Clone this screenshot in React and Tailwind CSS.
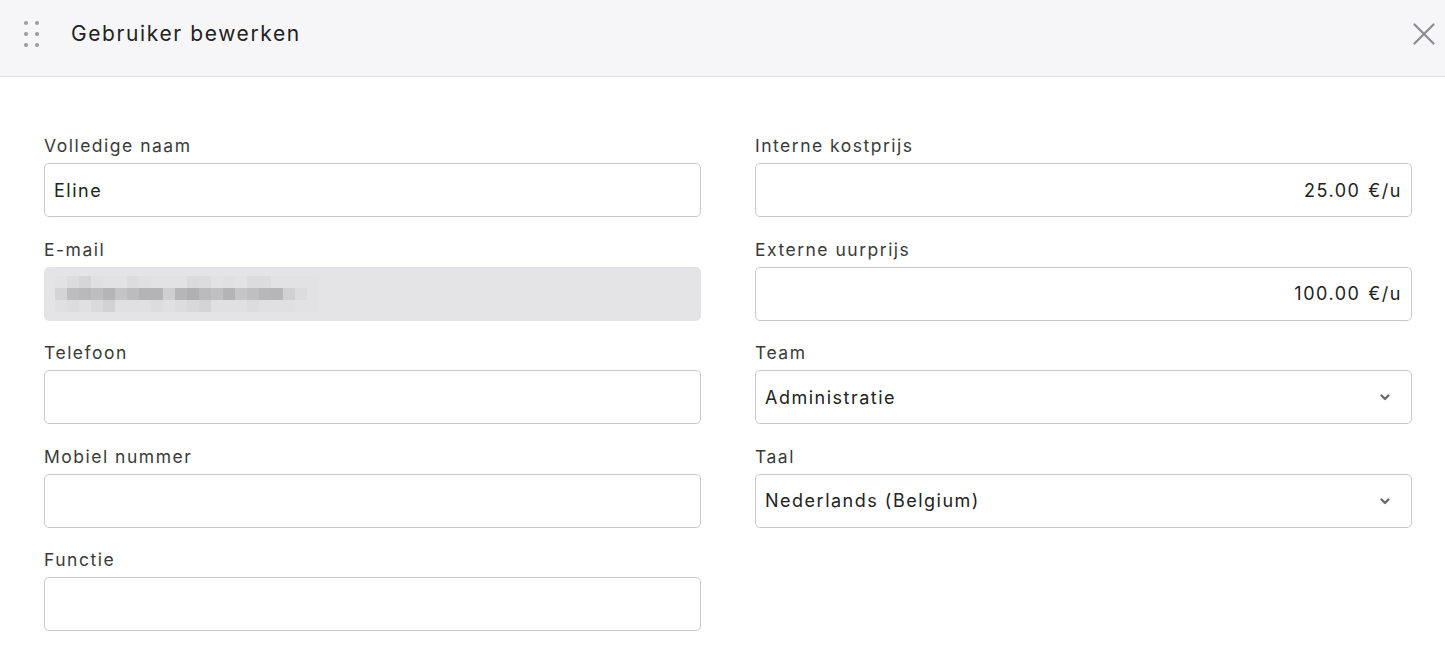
const shadesTop = ['#e2e2e4','#dcdcde','#d6d6d8','#e0e0e2','#e2e2e4','#e2e2e4','#dcdcde','#e0e0e2','#e2e2e4','#e2e2e4','#e2e2e4','#dadadc','#dcdcde','#e2e2e4','#e0e0e2','#e2e2e4','#dcdcde','#dcdcde','#e2e2e4','#e2e2e4','#e2e2e4','#e2e2e4']
const shadesMid = ['#d4d4d6','#bdbdbf','#b9b9bb','#bebebf','#b5b5b7','#c4c4c6','#bcbcbe','#b4b4b6','#b4b4b6','#cfcfd1','#b6b6b8','#b0b0b2','#bbbbbd','#c0c0c2','#b4b4b6','#c6c6c8','#bfbfc1','#b8b8ba','#b6b6b8','#d0d0d2','#dcdcde','#e2e2e4']
const shadesBot = ['#e0e0e2','#dcdcde','#e0e0e2','#dadadc','#d2d2d4','#e0e0e2','#e0e0e2','#e0e0e2','#dcdcde','#e0e0e2','#dcdcde','#d8d8da','#d4d4d6','#e0e0e2','#e0e0e2','#e0e0e2','#dcdcde','#e0e0e2','#e0e0e2','#e0e0e2','#e2e2e4','#e2e2e4']

function Label({ children }) {
  return <div className="h-6 mb-[5px] text-[17.5px] leading-6 tracking-[1.5px] text-[#3a3a3a]">{children}</div>
}

function Field({ label, children }) {
  return (
    <div className="mb-[20.5px]">
      <Label>{label}</Label>
      {children}
    </div>
  )
}

function TextInput({ value = '' }) {
  return (
    <div className="h-[54px] border border-[#c9c9cc] rounded-[5px] bg-white flex items-center px-[9px] text-[18px] tracking-[1.5px] text-[#222]">
      {value}
    </div>
  )
}

function PriceInput({ value }) {
  return (
    <div className="h-[54px] border border-[#c9c9cc] rounded-[5px] bg-white flex items-center justify-end gap-[8px] px-[9px] text-[18px] tracking-[1.5px] text-[#222]">
      <span>{value}</span>
      <span>€/u</span>
    </div>
  )
}

function SelectInput({ value }) {
  return (
    <div className="h-[54px] border border-[#c9c9cc] rounded-[5px] bg-white flex items-center justify-between pl-[9px] pr-[20px] text-[18px] tracking-[1.5px] text-[#222]">
      <span>{value}</span>
      <svg width="12" height="8" viewBox="0 0 12 8" fill="none">
        <path d="M2.5 2.5l3.5 3.5 3.5-3.5" stroke="#6b6b72" strokeWidth="2.4" strokeLinecap="round" strokeLinejoin="round" />
      </svg>
    </div>
  )
}

function BlurredEmail() {
  return (
    <div className="h-[54px] rounded-[5px] bg-[#e4e4e6] flex items-center pl-[11px]">
      <div className="flex flex-col">
        {[shadesTop, shadesMid, shadesBot].map((row, i) => (
          <div key={i} className="flex">
            {row.map((c, j) => (
              <div key={j} className="w-3 h-3" style={{ backgroundColor: c }} />
            ))}
          </div>
        ))}
      </div>
    </div>
  )
}

export default function App() {
  return (
    <div className="w-[1445px] h-[648px] bg-white overflow-hidden" style={{ fontFamily: 'Inter, "Liberation Sans", sans-serif' }}>
      <div className="h-[77px] bg-[#f6f6f8] border-b border-[#dfdfe2] flex items-center pb-[9px] pl-[24px] pr-[10px]">
        <div className="grid grid-cols-2 gap-x-[7px] gap-y-[7px]">
          {[0, 1, 2, 3, 4, 5].map(i => (
            <div key={i} className="w-[4px] h-[4px] rounded-full bg-[#9a9aa0]" />
          ))}
        </div>
        <div className="ml-[32px] text-[21px] tracking-[1.6px] text-[#222]">Gebruiker bewerken</div>
        <button className="ml-auto">
          <svg width="22" height="22" viewBox="0 0 22 22" fill="none">
            <path d="M1.5 1.5l19 19M20.5 1.5l-19 19" stroke="#8b8b90" strokeWidth="2.2" strokeLinecap="round" />
          </svg>
        </button>
      </div>

      <div className="grid grid-cols-2 gap-x-[54px] pl-[44px] pr-[33px] pt-[57px]">
        <div>
          <Field label="Volledige naam"><TextInput value="Eline" /></Field>
          <Field label="E-mail"><BlurredEmail /></Field>
          <Field label="Telefoon"><TextInput /></Field>
          <Field label="Mobiel nummer"><TextInput /></Field>
          <Field label="Functie"><TextInput /></Field>
        </div>
        <div>
          <Field label="Interne kostprijs"><PriceInput value="25.00" /></Field>
          <Field label="Externe uurprijs"><PriceInput value="100.00" /></Field>
          <Field label="Team"><SelectInput value="Administratie" /></Field>
          <Field label="Taal"><SelectInput value="Nederlands (Belgium)" /></Field>
        </div>
      </div>
    </div>
  )
}
